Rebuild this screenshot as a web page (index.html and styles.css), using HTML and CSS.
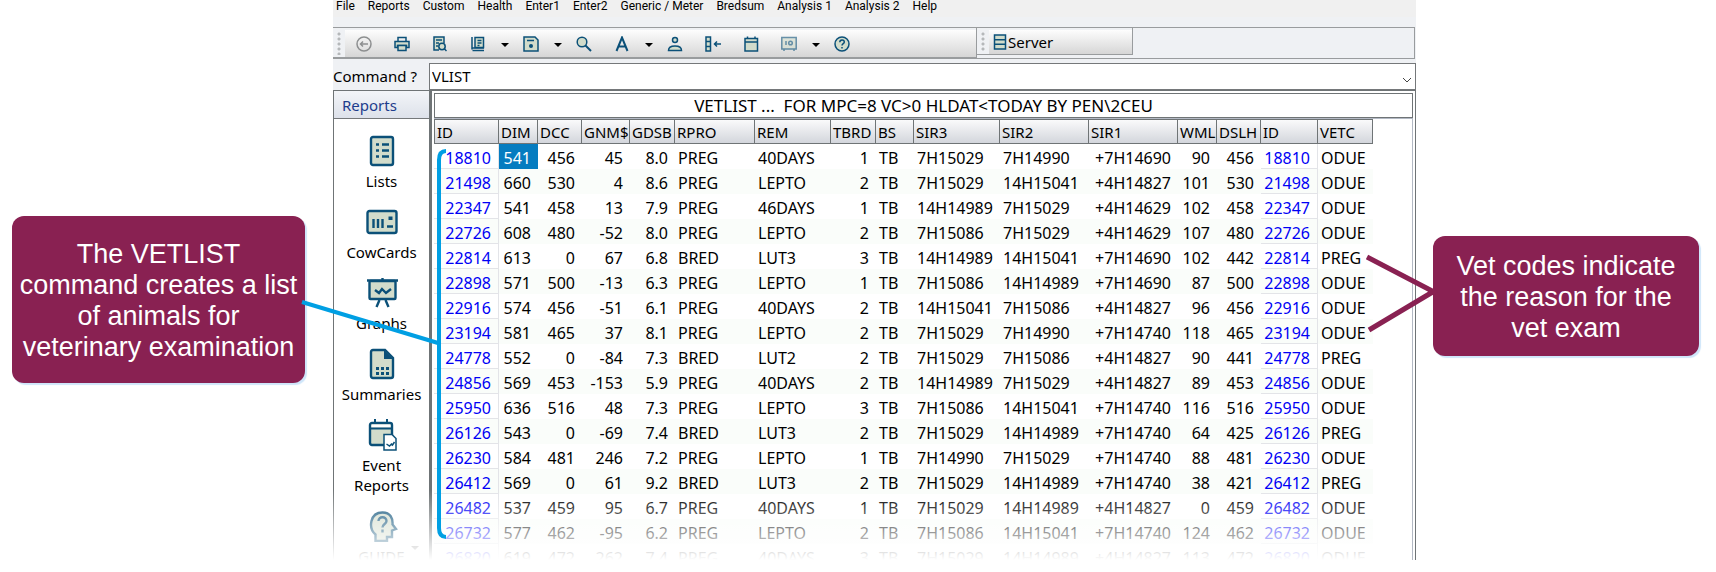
FILE: index.html
```
<!DOCTYPE html>
<html lang="en">
<head>
    <meta charset="UTF-8">
    <meta name="viewport" content="width=device-width, initial-scale=1.0">
    <title>VETLIST</title>
    <link rel="stylesheet" href="styles.css">
</head>
<body>
    <div class="page">
        <aside class="side left">
            <p class="callout">The VETLIST command creates a list of animals for veterinary examination</p>
        </aside>

        <main class="app">
            <div class="window">
                <nav class="menu">
                    <button>File</button>
                    <button>Reports</button>
                    <button>Custom</button>
                    <button>Health</button>
                    <button>Enter1</button>
                    <button>Enter2</button>
                    <button>Generic / Meter</button>
                    <button>Bredsum</button>
                    <button>Analysis 1</button>
                    <button>Analysis 2</button>
                    <button>Help</button>
                </nav>

                <div class="toolbar">
                    <div class="band tools">
                        <span class="grip"></span>
                        <div class="band-items">
                            <button class="tool disabled" aria-label="Back"><svg viewBox="0 0 16 16"><circle cx="8" cy="8" r="7"/><path d="M12 8H4.500M7 5.500L4.500 8L7 10.500"/></svg></button>
                            <button class="tool" aria-label="Print"><svg viewBox="0 0 16 16"><path class="fill" d="M1 5.500h14v6h-2.500v-2h-9v2H1z"/><path d="M4 5V1.500h8V5"/><path class="fill" d="M4 9.500h8v5H4z"/></svg></button>
                            <button class="tool" aria-label="Preview"><svg viewBox="0 0 16 16"><path class="fill" d="M7 14H2V1h10v6"/><path d="M4 4h6M4 7h3M4 10h2"/><circle class="fill" cx="10" cy="10.500" r="3.200"/><path d="M12.300 12.800L14.500 15"/></svg></button>
                            <button class="tool" aria-label="Report book"><svg viewBox="0 0 16 16"><path class="fill" d="M5 1.500h8.500v10H5z"/><path d="M2 1v12.500M2 12h12M2.500 14.500H14M7.500 4.500h4M7.500 7h4M7.500 9.500h2"/></svg></button>
                            <button class="drop" aria-label="Report book options"></button>
                            <button class="tool" aria-label="Save"><svg viewBox="0 0 16 16"><path class="fill" d="M1 1h11l3 3v11H1z"/><path d="M4 4.500h7"/><circle class="dot" cx="8" cy="10" r="2"/></svg></button>
                            <button class="drop" aria-label="Save options"></button>
                            <button class="tool" aria-label="Search"><svg viewBox="0 0 16 16"><circle class="fill" cx="6" cy="6" r="4.800"/><path class="thick" d="M9.500 9.500L15 15"/></svg></button>
                            <button class="tool" aria-label="Font"><svg viewBox="0 0 16 16"><path class="thick" d="M2.500 15L8 1.500L13.500 15M4.500 10.500h7"/></svg></button>
                            <button class="drop" aria-label="Font options"></button>
                            <button class="tool" aria-label="User"><svg viewBox="0 0 16 16"><circle class="fill" cx="8" cy="4" r="2.500"/><path class="fill" d="M1.500 14.500c0-3 2-4.500 6.500-4.500s6.500 1.500 6.500 4.500z"/></svg></button>
                            <button class="tool" aria-label="Insert column"><svg viewBox="0 0 16 16"><path class="fill" d="M1 1h4.500v14H1zM1 5.500h4.500M1 10.500h4.500"/><path d="M16 8H10M12 5.500L9.500 8l2.500 2.500"/></svg></button>
                            <button class="tool" aria-label="Calendar"><svg viewBox="0 0 16 16"><path class="fill" d="M2 2.500h12.500V15H2zM2 6h12.500M4.500 .5v2M12 .5v2"/></svg></button>
                            <button class="tool faded" aria-label="Vault"><svg viewBox="0 0 16 16"><path class="fill" d="M.8 1.500h14.400v11.500H.8z"/><path d="M3 13v2M13 13v2M5 5v4"/><circle cx="9.500" cy="7" r="1.800"/></svg></button>
                            <button class="drop" aria-label="Vault options"></button>
                            <button class="tool" aria-label="Help topics"><svg viewBox="0 0 16 16"><circle class="fill" cx="8" cy="8" r="7"/><path d="M5.800 6.200c0-3 4.500-3 4.500-.2c0 1.600-2.300 1.700-2.300 3.500M8 11v1.500"/></svg></button>
                        </div>
                    </div>
                    <div class="band connection">
                        <span class="grip"></span>
                        <button class="server"><svg viewBox="0 0 14 16"><path class="fill" d="M1.500 1h11v14h-11zM1.500 5.700h11M1.500 10.300h11"/></svg>Server</button>
                    </div>
                </div>

                <div class="command">
                    <label for="command">Command ?</label>
                    <div class="combo">
                        <input type="text" id="command" value="VLIST">
                        <button aria-label="Command history"><svg viewBox="0 0 10 6"><path d="M1 1l4 4l4-4"/></svg></button>
                    </div>
                </div>

                <div class="content">
                    <nav class="sidebar">
                        <h2>Reports</h2>
                        <div class="shortcuts">
                            <button class="shortcut">
                                <svg viewBox="0 0 32 32"><rect class="fill" x="5" y="2" width="22" height="28" rx="2"/><path class="heavy" d="M10 9.500h3M16 9.500h7M10 15.500h3M16 15.500h7M10 21.500h3M16 21.500h7"/></svg>
                                Lists
                            </button>
                            <button class="shortcut">
                                <svg viewBox="0 0 32 32"><rect class="fill" x="1.500" y="5" width="29" height="22" rx="2"/><path class="heavy" d="M7.500 13v9M12 13v9M16.500 13v9M21 20.500h6"/><path class="dot" d="M22.500 10.500h4v3.500h-4z"/></svg>
                                CowCards
                            </button>
                            <button class="shortcut">
                                <svg viewBox="0 0 32 32"><rect class="fill" x="3.500" y="4" width="26" height="18" rx="1"/><path class="heavy" d="M1 3.500h31M16.500 1v2M13.500 23l-3 7M19.500 23l3 7M9 13l4 3l3-4l4 4l5-4"/></svg>
                                Graphs
                            </button>
                            <button class="shortcut">
                                <svg viewBox="0 0 32 32"><path class="fill" d="M5 4q0-2 2-2h12l8 8v18q0 2-2 2H7q-2 0-2-2z"/><path class="dot" d="M18 2v9h9z"/><path class="dots" d="M10 20.500h13M10 25.500h13"/></svg>
                                Summaries
                            </button>
                            <button class="shortcut">
                                <svg viewBox="0 0 32 32"><rect class="fill" x="4" y="4" width="22" height="22" rx="2"/><path class="strip" d="M5.500 5.500h19v3h-19z"/><path class="thick" d="M4 9.500h22M9 0v4M21 0v4"/><path class="paper" d="M18 15.500h8l4 4V31H18z"/><path d="M20.500 25l3 2l2-2l1 1l2-3"/></svg>
                                Event Reports
                            </button>
                            <button class="shortcut">
                                <svg viewBox="0 0 32 32"><path class="fill" d="M9.500 31v-6.500C2 18 4 2.500 16.500 2.500c8 0 10.500 6 10 12l3.500 4.500l-4 1.500v6.500h-5v4z"/><path class="heavy" d="M12.500 11c0-5 8-5 8 0c0 3-4 3-4 6.500M16.500 19.500v3"/></svg>
                                GUIDE
                            </button>
                        </div>
                        <span class="scroll-arrow"></span>
                    </nav>

                    <section class="report">
                        <h1>VETLIST ... &nbsp;FOR MPC=8 VC&gt;0 HLDAT&lt;TODAY BY PEN\2CEU</h1>
                        <div class="list">
                            <table>
                                <colgroup>
                                    <col class="w65"><col class="w39"><col class="w44"><col class="w48">
                                    <col class="w45"><col class="w80"><col class="w76"><col class="w45">
                                    <col class="w38"><col class="w86"><col class="w89"><col class="w89">
                                    <col class="w39"><col class="w44"><col class="w57"><col class="w55">
                                </colgroup>
                                <thead>
                                    <tr>
                                        <th>ID</th><th>DIM</th><th>DCC</th><th>GNM$</th>
                                        <th>GDSB</th><th>RPRO</th><th>REM</th><th>TBRD</th>
                                        <th>BS</th><th>SIR3</th><th>SIR2</th><th>SIR1</th>
                                        <th>WML</th><th>DSLH</th><th>ID</th><th>VETC</th>
                                    </tr>
                                </thead>
                                <tbody id="rows"></tbody>
                            </table>
                        </div>
                    </section>
                </div>
                <div class="fade"></div>
            </div>

            <svg class="pointers" width="1100" height="560" viewBox="0 0 1100 560">
                <path class="blue" d="M-31 302L105 343"/>
                <path class="blue" d="M113 151Q106 151 106 160V528Q106 537 113 537"/>
                <path class="plum" d="M1034 257L1103 293M1036 330L1103 290"/>
            </svg>
        </main>

        <aside class="side right">
            <p class="callout">Vet codes indicate the reason for the vet exam</p>
        </aside>
    </div>

    <script>
        // ID DIM DCC GNM$ GDSB RPRO REM TBRD BS SIR3 SIR2 SIR1 WML DSLH VETC
        const animals = [
            '18810 541 456 45 8.0 PREG 40DAYS 1 TB 7H15029 7H14990 +7H14690 90 456 ODUE',
            '21498 660 530 4 8.6 PREG LEPTO 2 TB 7H15029 14H15041 +4H14827 101 530 ODUE',
            '22347 541 458 13 7.9 PREG 46DAYS 1 TB 14H14989 7H15029 +4H14629 102 458 ODUE',
            '22726 608 480 -52 8.0 PREG LEPTO 2 TB 7H15086 7H15029 +4H14629 107 480 ODUE',
            '22814 613 0 67 6.8 BRED LUT3 3 TB 14H14989 14H15041 +7H14690 102 442 PREG',
            '22898 571 500 -13 6.3 PREG LEPTO 1 TB 7H15086 14H14989 +7H14690 87 500 ODUE',
            '22916 574 456 -51 6.1 PREG 40DAYS 2 TB 14H15041 7H15086 +4H14827 96 456 ODUE',
            '23194 581 465 37 8.1 PREG LEPTO 2 TB 7H15029 7H14990 +7H14740 118 465 ODUE',
            '24778 552 0 -84 7.3 BRED LUT2 2 TB 7H15029 7H15086 +4H14827 90 441 PREG',
            '24856 569 453 -153 5.9 PREG 40DAYS 2 TB 14H14989 7H15029 +4H14827 89 453 ODUE',
            '25950 636 516 48 7.3 PREG LEPTO 3 TB 7H15086 14H15041 +7H14740 116 516 ODUE',
            '26126 543 0 -69 7.4 BRED LUT3 2 TB 7H15029 14H14989 +7H14740 64 425 PREG',
            '26230 584 481 246 7.2 PREG LEPTO 1 TB 7H14990 7H15029 +7H14740 88 481 ODUE',
            '26412 569 0 61 9.2 BRED LUT3 2 TB 7H15029 14H14989 +7H14740 38 421 PREG',
            '26482 537 459 95 6.7 PREG 40DAYS 1 TB 7H15029 14H14989 +4H14827 0 459 ODUE',
            '26732 577 462 -95 6.2 PREG LEPTO 2 TB 7H15086 14H15041 +7H14740 124 462 ODUE',
            '26820 619 472 262 7.4 PREG 40DAYS 3 TB 7H15029 14H14989 +4H14827 113 472 ODUE'
        ];
        const numeric = [1, 2, 3, 4, 7, 11, 12, 13];
        const body = document.getElementById('rows');

        animals.forEach(function(line, r) {
            let cells = line.split(' ');
            // the ID is shown again before the vet code
            cells.splice(14, 0, cells[0]);
            let row = body.insertRow();
            cells.forEach(function(text, c) {
                let cell = row.insertCell();
                cell.textContent = text;
                if (c === 0 || c === 14) {
                    cell.className = 'id';
                } else if (numeric.includes(c)) {
                    cell.className = 'num';
                }
                if (r === 0 && c === 1) {
                    cell.classList.add('selected');
                }
            });
        });
    </script>
</body>
</html>
```
FILE: styles.css
```
* {
    margin: 0;
    padding: 0;
    box-sizing: border-box;
}

body {
    font-family: 'Noto Sans', 'Open Sans', sans-serif;
    font-size: 15px;
    line-height: 20px;
    color: #000;
    background: #fff;
}

button,
input {
    font: inherit;
    color: inherit;
    background: none;
    border: none;
    outline: none;
}

svg {
    fill: none;
    stroke: #0b5078;
    stroke-width: 1.5;
}

.fill {
    fill: #d2dccb;
}

.dot {
    fill: #0b5078;
    stroke: none;
}

.paper {
    fill: #fff;
}

.strip {
    fill: #fff;
    stroke: none;
}

.thick {
    stroke-width: 2;
}

.page {
    display: grid;
    grid-template-columns: 333fr 1083fr 300fr;
    height: 100vh;
    overflow: hidden;
}

/* callouts */

.side.left {
    padding: 216px 28px 0 12px;
}

.side.right {
    padding: 236px 17px 0 17px;
}

.callout {
    border-radius: 12px;
    background: #892152;
    box-shadow: 2px 2px 1px #cfe6fa;
    color: #fff;
    font-family: 'Liberation Sans', Arial, sans-serif;
    font-size: 27px;
    line-height: 31px;
    text-align: center;
}

.left .callout {
    padding: 23px 6px 20px;
}

.right .callout {
    padding: 15px 20px 12px;
}

/* application window */

.app {
    position: relative;
    min-width: 0;
    height: calc(100vh - 12px);
}

.window {
    position: relative;
    display: flex;
    flex-direction: column;
    height: 100%;
    overflow: hidden;
    background: #eff1f4;
}

.menu {
    display: flex;
    align-items: flex-start;
    gap: 13px;
    height: 17px;
    padding: 0 3px;
    background: #f0f0f0;
    font-family: Roboto, 'Noto Sans', sans-serif;
    font-size: 12px;
    line-height: 13px;
}

.menu button {
    white-space: nowrap;
}

.toolbar {
    display: flex;
    align-items: flex-start;
    height: 32px;
    margin: 10px 1px 4px 0;
    border: 1px solid #999c9e;
    border-left: none;
    background: #eff1f4;
}

.band {
    display: flex;
    padding-top: 2px;
    border-right: 1px solid #999c9e;
    border-bottom: 1px solid #999c9e;
}

.tools {
    flex: 0 1 644px;
    height: 30px;
}

.connection {
    flex: 0 1 156px;
    height: 27px;
}

.grip {
    flex: 0 0 12px;
    margin: 2px 0;
    background: radial-gradient(circle at 6px 2px, #b5b8ba 1px, transparent 2px) 0 0 / 12px 5px;
}

.band-items,
.server {
    display: flex;
    flex: 1;
    align-items: center;
    background: linear-gradient(#fdfdfd, #d6d6d6);
}

.tool {
    display: flex;
    align-items: center;
    justify-content: center;
    width: 38px;
    height: 26px;
}

.tool svg {
    width: 16px;
    height: 16px;
}

.disabled svg {
    stroke: #8d8f90;
}

.faded {
    opacity: 0.6;
}

.drop {
    display: flex;
    justify-content: center;
    width: 15px;
    padding-top: 2px;
}

.drop::before {
    content: "";
    border: 4px solid transparent;
    border-top-color: #000;
    border-bottom: none;
}

.server {
    gap: 1px;
    padding-left: 4px;
}

.server svg {
    width: 14px;
    height: 16px;
}

.command {
    display: flex;
    height: 27px;
}

.command label {
    flex: 0 0 96px;
    line-height: 26px;
}

.combo {
    display: flex;
    flex: 1;
    border: 1px solid #75787a;
    background: #fff;
}

.combo input {
    flex: 1;
    min-width: 0;
    padding: 0 0 2px 2px;
}

.combo button {
    width: 17px;
}

.combo svg {
    width: 10px;
    height: 6px;
    stroke: #444;
    stroke-width: 1;
}

.content {
    display: flex;
    flex: 1;
    min-height: 0;
    border: 1px solid #6f7476;
    border-bottom: none;
    background: #fff;
}

/* report shortcuts */

.sidebar {
    position: relative;
    flex: 0 0 95px;
}

.sidebar h2 {
    height: 28px;
    padding-left: 8px;
    border-bottom: 1px solid #75787a;
    background: linear-gradient(#f3f5f8, #dde1ea);
    color: #1d3c8c;
    font-size: 15px;
    font-weight: 400;
    line-height: 28px;
}

.shortcuts {
    display: flex;
    flex-direction: column;
    gap: 15px;
    padding: 16px 6px 0;
}

.shortcut {
    display: flex;
    flex-direction: column;
    gap: 4px;
    align-items: center;
    line-height: 20px;
}

.shortcut svg {
    width: 32px;
    height: 32px;
}

.shortcut .fill,
.heavy {
    stroke-width: 2.4;
}

.dots {
    stroke-width: 3;
    stroke-dasharray: 3 2;
}

.scroll-arrow {
    position: absolute;
    right: 10px;
    bottom: 10px;
    border: 4px solid transparent;
    border-top-color: #777;
    border-bottom: none;
}

/* animal list */

.report {
    flex: 1;
    min-width: 0;
    padding: 2px;
    border-left: 3px solid #6f7476;
    overflow: hidden;
}

.report h1 {
    height: 25px;
    border: 1px solid #6f7476;
    font-size: 17px;
    font-weight: 400;
    line-height: 24px;
    text-align: center;
}

.list {
    height: 100%;
    border: 1px solid #b3b9c4;
    border-bottom: none;
    border-left: none;
}

table {
    width: 939px;
    font-size: 16px;
    table-layout: fixed;
    border-collapse: separate;
    border-spacing: 0;
}

.w38 { width: 38px; }
.w39 { width: 39px; }
.w44 { width: 44px; }
.w45 { width: 45px; }
.w48 { width: 48px; }
.w55 { width: 55px; }
.w57 { width: 57px; }
.w65 { width: 65px; }
.w76 { width: 76px; }
.w80 { width: 80px; }
.w86 { width: 86px; }
.w89 { width: 89px; }

th {
    height: 25px;
    padding-left: 2px;
    border: 1px solid #6f7476;
    border-left: none;
    background: linear-gradient(#fafafb, #d3d6dc);
    font-size: 15px;
    font-weight: 400;
    text-align: left;
    white-space: nowrap;
}

th:first-child {
    border-left: 1px solid #6f7476;
}

td {
    height: 25px;
    padding: 3px 0 0 3px;
    border-bottom: 1px solid transparent;
    white-space: nowrap;
}

tbody tr:nth-child(even) {
    background: #fafdfa;
}

td.num,
td.id {
    padding: 3px 7px 0 0;
    text-align: right;
}

td.id {
    border-right: 1px solid #e3e4e8;
    border-bottom: 1px solid #e3e4e8;
    color: #0000f5;
}

td.selected {
    background: #057cc0;
    color: #fff;
}

.fade {
    position: absolute;
    right: 6px;
    bottom: 0;
    left: 0;
    height: 70px;
    background: linear-gradient(rgba(255, 255, 255, 0), #fff);
}

.pointers {
    position: absolute;
    top: 0;
    left: 0;
    overflow: visible;
    stroke-width: 4;
    pointer-events: none;
}

.blue {
    stroke: #009fe3;
}

.plum {
    stroke: #892152;
    stroke-width: 5;
}
```
